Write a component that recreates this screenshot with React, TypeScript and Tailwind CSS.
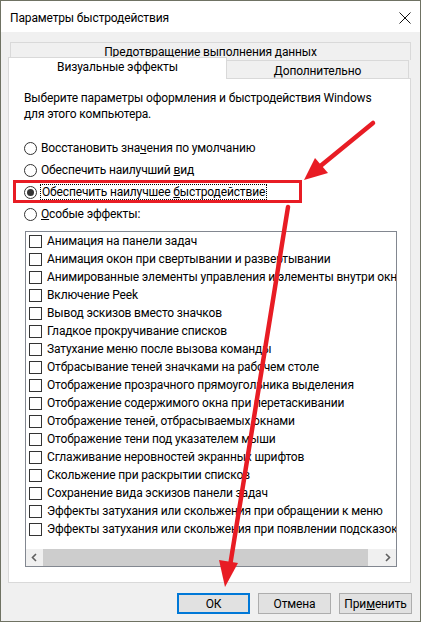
import React from "react";

const items = [
  "Анимация на панели задач",
  "Анимация окон при свертывании и развертывании",
  "Анимированные элементы управления и элементы внутри окна",
  "Включение Peek",
  "Вывод эскизов вместо значков",
  "Гладкое прокручивание списков",
  "Затухание меню после вызова команды",
  "Отбрасывание теней значками на рабочем столе",
  "Отображение прозрачного прямоугольника выделения",
  "Отображение содержимого окна при перетаскивании",
  "Отображение теней, отбрасываемых окнами",
  "Отображение тени под указателем мыши",
  "Сглаживание неровностей экранных шрифтов",
  "Скольжение при раскрытии списков",
  "Сохранение вида эскизов панели задач",
  "Эффекты затухания или скольжения при обращении к меню",
  "Эффекты затухания или скольжения при появлении подсказок",
];

function Radio({ checked }: { checked?: boolean }) {
  return (
    <span className="flex h-[13px] w-[13px] shrink-0 items-center justify-center rounded-full border border-[#333333] bg-white">
      {checked && <span className="h-[7px] w-[7px] rounded-full bg-[#333333]" />}
    </span>
  );
}

function RadioRow({
  children,
  checked,
  focused,
}: {
  children: React.ReactNode;
  checked?: boolean;
  focused?: boolean;
}) {
  return (
    <div className="flex h-[22px] items-center pl-[15px]">
      <Radio checked={checked} />
      <span
        className={
          focused
            ? "ml-[3px] border border-dotted border-black px-[1px] leading-[14px]"
            : "ml-[4px] leading-[16px]"
        }
      >
        {children}
      </span>
    </div>
  );
}

function Chevron({ dir }: { dir: "left" | "right" }) {
  return (
    <svg width="17" height="17" viewBox="0 0 17 17">
      <path
        d={dir === "left" ? "M10 5 L6.5 8.5 L10 12" : "M7 5 L10.5 8.5 L7 12"}
        fill="none"
        stroke="#606060"
        strokeWidth="1.6"
      />
    </svg>
  );
}

function Button({
  children,
  primary,
}: {
  children: React.ReactNode;
  primary?: boolean;
}) {
  return (
    <div
      className={
        primary
          ? "flex h-[21px] w-[73px] items-center justify-center border-2 border-[#0078d7] bg-[#e1e1e1]"
          : "flex h-[21px] w-[73px] items-center justify-center border border-[#adadad] bg-[#e1e1e1]"
      }
    >
      {children}
    </div>
  );
}

export default function App() {
  return (
    <div className="relative flex h-[622px] w-[421px] flex-col overflow-hidden border border-[#6f7263] bg-[#f0f0f0] font-['Roboto',sans-serif] text-[12px] tracking-[-0.15px] text-black">
      {/* title bar */}
      <div className="flex h-[31px] shrink-0 items-center justify-between bg-white pl-[9px] pr-[9px]">
        <span className="pt-[2px]">Параметры быстродействия</span>
        <svg width="12" height="12" viewBox="0 0 12 12" className="mt-[2px]">
          <path d="M0.5 0.5 L11.5 11.5 M11.5 0.5 L0.5 11.5" stroke="#111" strokeWidth="1" />
        </svg>
      </div>

      <div className="flex flex-col pl-[7px] pt-[10px]">
        {/* tabs */}
        <div className="ml-[2px] flex h-[18px] w-[401px] items-start justify-center border border-b-0 border-[#d9d9d9] pt-[1px] leading-[16px]">
          Предотвращение выполнения данных
        </div>
        <div className="-mt-[3px] flex h-[21px] items-end">
          <div className="relative -mb-px flex h-[22px] w-[219px] items-start justify-center border border-b-0 border-[#d9d9d9] bg-white pt-[1px] leading-[16px]">
            Визуальные эффекты
          </div>
          <div className="flex h-[18px] w-[182px] items-center justify-center border border-b-0 border-l-0 border-[#d9d9d9] pt-[2px] leading-[16px]">
            Дополнительно
          </div>
        </div>

        {/* panel */}
        <div className="flex h-[505px] w-[403px] flex-col border border-[#d9d9d9] bg-white pt-[11px]">
          <p className="pl-[15px] leading-[16px]">
            Выберите параметры оформления и быстродействия Windows
            <br />
            для этого компьютера.
          </p>

          <div className="mt-[15px] flex flex-col">
            <RadioRow>
              Восстановить зна<u>ч</u>ения по умолчанию
            </RadioRow>
            <RadioRow>
              Обеспечить наилучший <u>в</u>ид
            </RadioRow>
            <RadioRow checked focused>
              Обеспечить наилучшее <u>б</u>ыстродействие
            </RadioRow>
            <RadioRow>
              <u>О</u>собые эффекты:
            </RadioRow>
          </div>

          {/* list */}
          <div className="ml-[16px] mt-[6px] flex h-[336px] w-[372px] flex-col border border-[#828790] bg-white">
            <div className="flex flex-col overflow-hidden">
              {items.map((t) => (
                <div key={t} className="flex h-[18px] shrink-0 items-center pl-[3px]">
                  <span className="h-[13px] w-[13px] shrink-0 border border-[#333333] bg-white" />
                  <span className="ml-[5px] whitespace-nowrap leading-[16px]">{t}</span>
                </div>
              ))}
            </div>
            <div className="mt-auto flex h-[17px] shrink-0 items-center bg-[#f0f0f0]">
              <Chevron dir="left" />
              <div className="h-[17px] w-[325px] bg-[#cdcdcd]" />
              <div className="flex-1" />
              <Chevron dir="right" />
            </div>
          </div>
        </div>

        {/* buttons */}
        <div className="ml-[169px] mt-[10px] flex gap-[8px]">
          <Button primary>ОК</Button>
          <Button>Отмена</Button>
          <Button>
            При<u>м</u>енить
          </Button>
        </div>
      </div>

      {/* red annotation overlay */}
      <svg
        className="pointer-events-none absolute left-[-1px] top-[-1px]"
        width="421"
        height="622"
        viewBox="0 0 421 622"
      >
        <rect x="14.5" y="181.5" width="286" height="20" fill="none" stroke="#e81c24" strokeWidth="3" />
        <line x1="373" y1="123" x2="318" y2="168" stroke="#e81c24" strokeWidth="4.5" strokeLinecap="round" />
        <polygon points="304,180 315,158 328,173" fill="#e81c24" />
        <line x1="288" y1="207" x2="230" y2="566" stroke="#e81c24" strokeWidth="4.5" strokeLinecap="round" />
        <polygon points="225,587 219,560 238,563" fill="#e81c24" />
      </svg>
    </div>
  );
}
